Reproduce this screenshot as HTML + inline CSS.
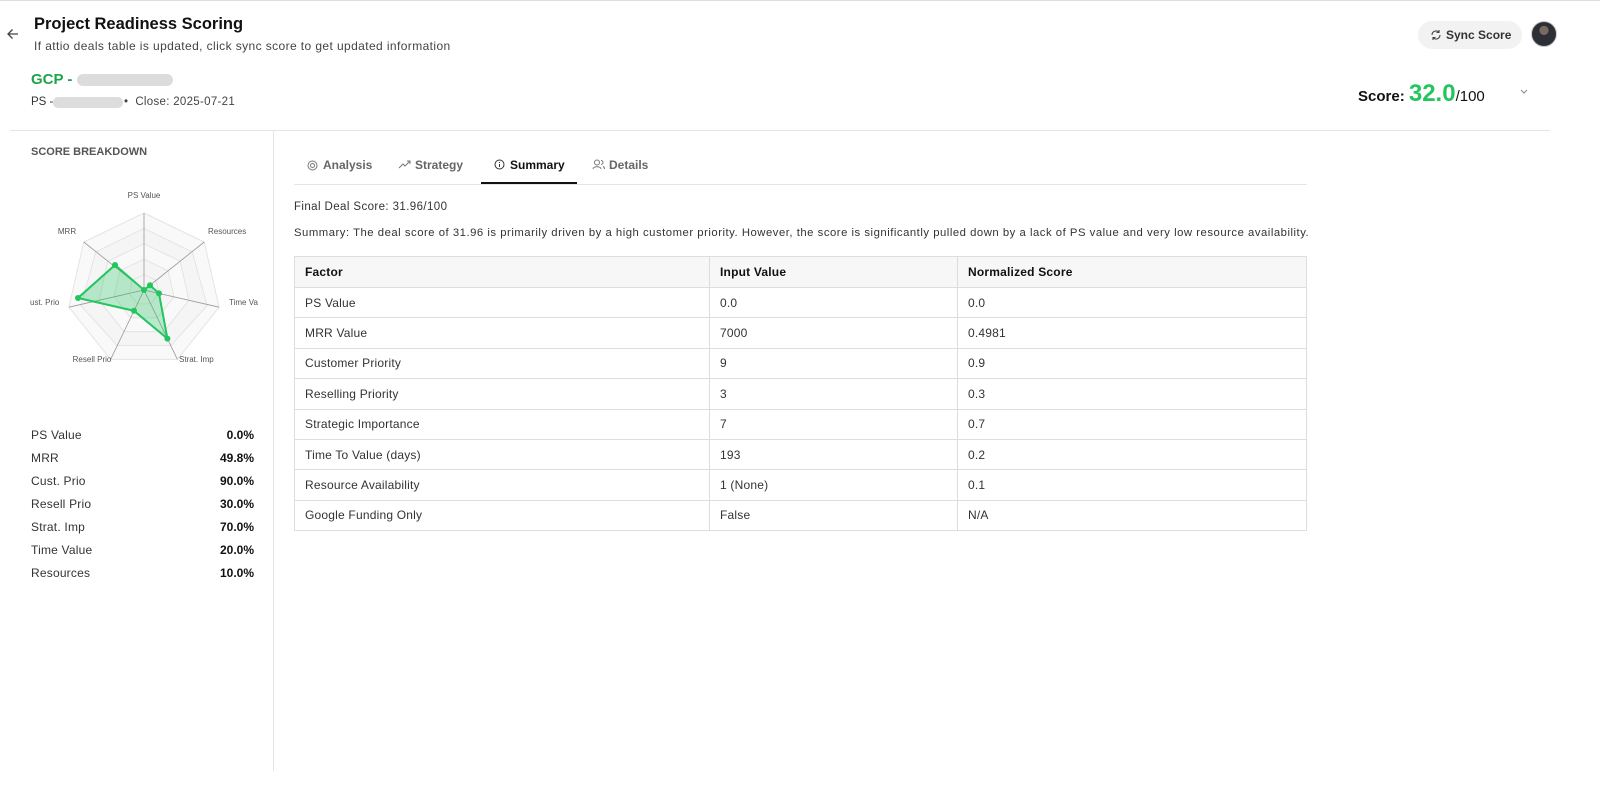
<!DOCTYPE html>
<html><head><meta charset="utf-8"><style>
*{margin:0;padding:0;box-sizing:border-box}
body{width:1600px;height:797px;background:#fff;font-family:"Liberation Sans",sans-serif;color:#111;position:relative;overflow:hidden}
.a{position:absolute;white-space:nowrap}
table{border-collapse:collapse;position:absolute;left:294px;top:256px;width:1013px;font-size:12px;letter-spacing:0.2px}
td,th{border:1px solid #ddd;height:30.4px;padding:0 10px;text-align:left;color:#333}
th{background:#f7f7f8;font-weight:bold;color:#111;height:31px}
.l{font-size:12px;color:#333;letter-spacing:0.2px}
.r{font-size:12px;font-weight:bold;color:#111;right:1346px}
</style></head><body>
<div class="a" style="left:0;top:0;width:1600px;height:1px;background:#ddd"></div>
<svg class="a" style="left:6px;top:27px" width="14" height="14" viewBox="0 0 14 14"><path d="M12 7H2M6.5 2.5L2 7l4.5 4.5" fill="none" stroke="#444" stroke-width="1.3"/></svg>
<div class="a" style="left:34px;top:15px;font-size:16.5px;font-weight:bold">Project Readiness Scoring</div>
<div class="a" style="left:34px;top:39px;font-size:12px;color:#444;letter-spacing:0.4px">If attio deals table is updated, click sync score to get updated information</div>
<div class="a" style="left:31px;top:71px;font-size:15px;font-weight:bold;color:#1fa34a">GCP -</div>
<div class="a" style="left:77px;top:74px;width:96px;height:12px;border-radius:6px;background:#dcdcdc"></div>
<div class="a" style="left:31px;top:96px;font-size:11.5px;color:#333">PS -</div>
<div class="a" style="left:53px;top:97px;width:70px;height:11px;border-radius:5px;background:#ddd"></div>
<div class="a" style="left:124px;top:96px;font-size:11.5px;color:#444;letter-spacing:0.3px">•&nbsp; Close: 2025-07-21</div>
<div class="a" style="left:1418px;top:21px;width:104px;height:28px;border-radius:14px;background:#f2f2f3;font-size:12px;font-weight:bold;color:#333;padding:7px 0 0 28px">Sync Score</div>
<svg class="a" style="left:1430px;top:29px" width="12" height="12" viewBox="0 0 12 12"><path d="M2 6a4 4 0 0 1 7-2.6M10 6a4 4 0 0 1-7 2.6M9 1v2.5H6.5M3 11V8.5h2.5" fill="none" stroke="#444" stroke-width="1.1"/></svg>
<div class="a" style="left:1531px;top:21px;width:26px;height:26px;border-radius:50%;background:radial-gradient(circle at 50% 35%,#7a6a60 0 22%,#2c2f36 24% 100%);border:1px solid #ccc"></div>
<div class="a" style="left:1358px;top:80px;font-size:15px;font-weight:bold">Score: <span style="font-size:24px;color:#22c55e">32.0</span><span style="font-weight:normal">/100</span></div>
<svg class="a" style="left:1519px;top:88px" width="10" height="8"><path d="M2 2l3 3 3-3" fill="none" stroke="#888" stroke-width="1"/></svg>
<div class="a" style="left:10px;top:130px;width:1540px;height:1px;background:#e5e5e5"></div>
<div class="a" style="left:273px;top:131px;width:1px;height:640px;background:#e5e5e5"></div>
<div class="a" style="left:31px;top:146px;font-size:11px;font-weight:bold;color:#555">SCORE BREAKDOWN</div>
<svg class="a" style="left:0;top:0" width="280" height="380" font-family="Liberation Sans" font-size="8" fill="#555">
<g fill="none" stroke="#e4e4e4">
<polygon points="144,213 204.2,242 219.1,307.2 177.4,359.4 110.6,359.4 68.9,307.2 83.8,242" fill="#f9f9fa"/>
<polygon points="144,228.4 192.2,252 207.1,305.6 170.8,345.5 117.2,345.5 80.9,305.6 95.8,252" fill="#f5f5f6"/>
<polygon points="144,243.8 180.1,261.2 189,300.3 164,331.6 124,331.6 99,300.3 107.9,261.2" fill="#f9f9fa"/>
<polygon points="144,259.2 168.1,270.8 174,296.9 157.4,317.7 130.6,317.7 114,296.9 119.9,270.8" fill="#f5f5f6"/>
<polygon points="144,274.6 156,280.4 159,293.4 150.7,303.9 137.3,303.9 129,293.4 132,280.4"/>
</g>
<g stroke="#999" stroke-width="0.8"><line x1="144" y1="290" x2="144" y2="213"/><line x1="144" y1="290" x2="204.2" y2="242"/><line x1="144" y1="290" x2="219.1" y2="307.2"/><line x1="144" y1="290" x2="177.4" y2="359.4"/><line x1="144" y1="290" x2="110.6" y2="359.4"/><line x1="144" y1="290" x2="68.9" y2="307.2"/><line x1="144" y1="290" x2="83.8" y2="242"/></g>
<polygon points="144,290 150,285.2 159,293.4 167.4,338.6 134,310.8 78,298 115,265" fill="rgba(34,197,94,0.3)" stroke="#22c55e" stroke-width="2"/>
<g fill="#22c55e"><circle cx="144" cy="290" r="3"/><circle cx="150" cy="285.2" r="3"/><circle cx="159" cy="293.4" r="3"/><circle cx="167.4" cy="338.6" r="3"/><circle cx="134" cy="310.8" r="3"/><circle cx="78" cy="298" r="3"/><circle cx="115" cy="265" r="3"/></g>
<text x="144" y="198" text-anchor="middle">PS Value</text>
<text x="208" y="234">Resources</text>
<text x="229" y="305">Time Va</text>
<text x="179" y="362">Strat. Imp</text>
<text x="92" y="362" text-anchor="middle">Resell Prio</text>
<text x="30" y="305">ust. Prio</text>
<text x="67" y="234" text-anchor="middle">MRR</text>
</svg>
<div class="a l" style="left:31px;top:428px">PS Value</div><div class="a r" style="top:428px">0.0%</div>
<div class="a l" style="left:31px;top:451px">MRR</div><div class="a r" style="top:451px">49.8%</div>
<div class="a l" style="left:31px;top:474px">Cust. Prio</div><div class="a r" style="top:474px">90.0%</div>
<div class="a l" style="left:31px;top:497px">Resell Prio</div><div class="a r" style="top:497px">30.0%</div>
<div class="a l" style="left:31px;top:520px">Strat. Imp</div><div class="a r" style="top:520px">70.0%</div>
<div class="a l" style="left:31px;top:543px">Time Value</div><div class="a r" style="top:543px">20.0%</div>
<div class="a l" style="left:31px;top:566px">Resources</div><div class="a r" style="top:566px">10.0%</div>
<div class="a" style="left:294px;top:184px;width:1013px;height:1px;background:#e5e5e5"></div>
<svg class="a" style="left:307px;top:160px" width="11" height="11"><circle cx="5.5" cy="5.5" r="4.5" fill="none" stroke="#777"/><circle cx="5.5" cy="5.5" r="2" fill="none" stroke="#777"/></svg>
<div class="a" style="left:323px;top:158px;font-size:12px;font-weight:bold;color:#666">Analysis</div>
<svg class="a" style="left:398px;top:160px" width="13" height="10"><path d="M1 8l4-4 2 2 5-5M9 1h3v3" fill="none" stroke="#777"/></svg>
<div class="a" style="left:415px;top:158px;font-size:12px;font-weight:bold;color:#666">Strategy</div>
<svg class="a" style="left:494px;top:159px" width="11" height="11"><circle cx="5.5" cy="5.5" r="4.5" fill="none" stroke="#333"/><path d="M5.5 5v3M5.5 3v1" stroke="#333"/></svg>
<div class="a" style="left:510px;top:158px;font-size:12px;font-weight:bold;color:#111">Summary</div>
<div class="a" style="left:481px;top:182px;width:96px;height:2px;background:#111"></div>
<svg class="a" style="left:592px;top:159px" width="13" height="11"><circle cx="5" cy="3.5" r="2.5" fill="none" stroke="#777"/><path d="M1 10c0-3 8-3 8 0M9 1.5a2 2 0 0 1 0 4M11 7.5c1 .5 1.5 1.5 1.5 2.5" fill="none" stroke="#777"/></svg>
<div class="a" style="left:609px;top:158px;font-size:12px;font-weight:bold;color:#666">Details</div>
<div class="a" style="left:294px;top:201px;font-size:11.5px;color:#333;letter-spacing:0.4px">Final Deal Score: 31.96/100</div>
<div class="a" style="left:294px;top:227px;font-size:11.3px;color:#333;letter-spacing:0.52px">Summary: The deal score of 31.96 is primarily driven by a high customer priority. However, the score is significantly pulled down by a lack of PS value and very low resource availability.</div>
<table>
<tr><th style="width:415px">Factor</th><th style="width:248px">Input Value</th><th>Normalized Score</th></tr>
<tr><td>PS Value</td><td>0.0</td><td>0.0</td></tr>
<tr><td>MRR Value</td><td>7000</td><td>0.4981</td></tr>
<tr><td>Customer Priority</td><td>9</td><td>0.9</td></tr>
<tr><td>Reselling Priority</td><td>3</td><td>0.3</td></tr>
<tr><td>Strategic Importance</td><td>7</td><td>0.7</td></tr>
<tr><td>Time To Value (days)</td><td>193</td><td>0.2</td></tr>
<tr><td>Resource Availability</td><td>1 (None)</td><td>0.1</td></tr>
<tr><td>Google Funding Only</td><td>False</td><td>N/A</td></tr>
</table>
</body></html>
